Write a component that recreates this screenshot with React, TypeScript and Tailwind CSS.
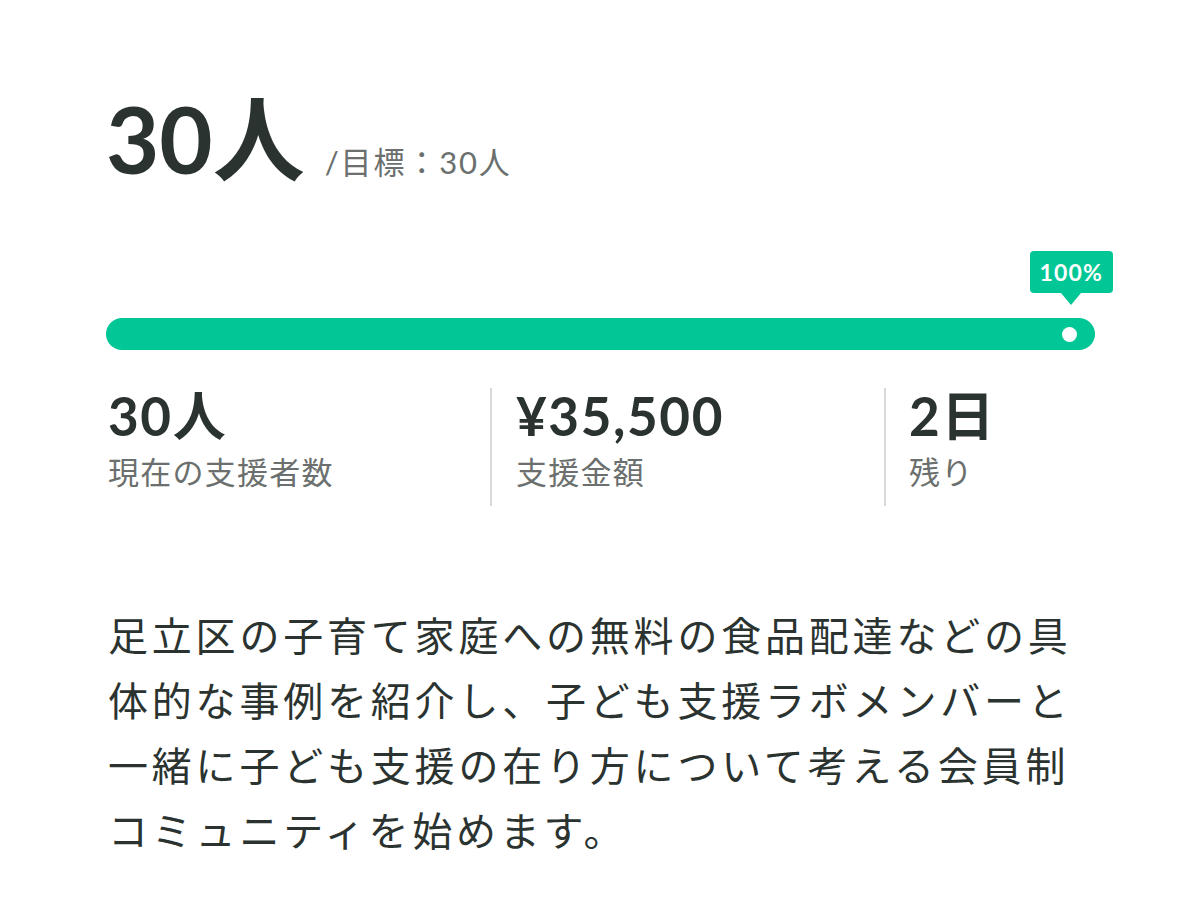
import React from "react";

const font = { fontFamily: "Lato, 'Noto Sans CJK JP', sans-serif" };

export default function App() {
  return (
    <div className="min-h-[902px] w-[1200px] bg-white text-[#2b3330]" style={font}>
      <div className="pl-[106px] pr-[105px] pt-[84px]">
        <div className="flex items-baseline">
          <span className="text-[92px] font-bold leading-[110px]">30人</span>
          <span className="ml-[20px] text-[31px] leading-none text-[#6b6f6d] tracking-[0.06em]">/目標：30人</span>
        </div>

        <div className="relative mt-[124px]">
          <div className="absolute right-[-18px] bottom-[45px] flex flex-col items-center">
            <div className="rounded-[4px] bg-[#00c795] px-[10px] py-[6px] text-[23px] font-bold leading-[30px] tracking-[0.05em] text-white">
              100%
            </div>
            <div className="h-0 w-0 border-l-[10px] border-r-[10px] border-t-[12px] border-l-transparent border-r-transparent border-t-[#00c795]" />
          </div>
          <div className="flex h-[32px] w-full items-center justify-end rounded-full bg-[#00c795] pr-[18px]">
            <div className="h-[15px] w-[15px] rounded-full bg-white" />
          </div>
        </div>

        <div className="mt-[38px] flex">
          <div className="w-[384px] pl-[2px]">
            <div className="text-[53px] font-bold leading-[56px] tracking-[0.03em]">30人</div>
            <div className="mt-[8px] text-[31px] leading-[40px] tracking-[0.04em] text-[#6b6f6d]">現在の支援者数</div>
          </div>
          <div className="w-[394px] border-l-2 border-[#d9d9d9] pl-[24px]">
            <div className="text-[53px] font-bold leading-[56px] tracking-[0.03em]">¥35,500</div>
            <div className="mt-[8px] text-[31px] leading-[40px] tracking-[0.04em] text-[#6b6f6d]">支援金額</div>
            <div className="h-[14px]" />
          </div>
          <div className="border-l-2 border-[#d9d9d9] pl-[23px]">
            <div className="text-[53px] font-bold leading-[56px] tracking-[0.03em]">2日</div>
            <div className="mt-[8px] text-[31px] leading-[40px] tracking-[0.04em] text-[#6b6f6d]">残り</div>
          </div>
        </div>

        <p className="mt-[98px] pl-[2px] text-[40px] leading-[65px] tracking-[0.095em] text-[#2b3330]">
          足立区の子育て家庭への無料の食品配達などの具体的な事例を紹介し、子ども支援ラボメンバーと一緒に子ども支援の在り方について考える会員制コミュニティを始めます。
        </p>
      </div>
    </div>
  );
}
